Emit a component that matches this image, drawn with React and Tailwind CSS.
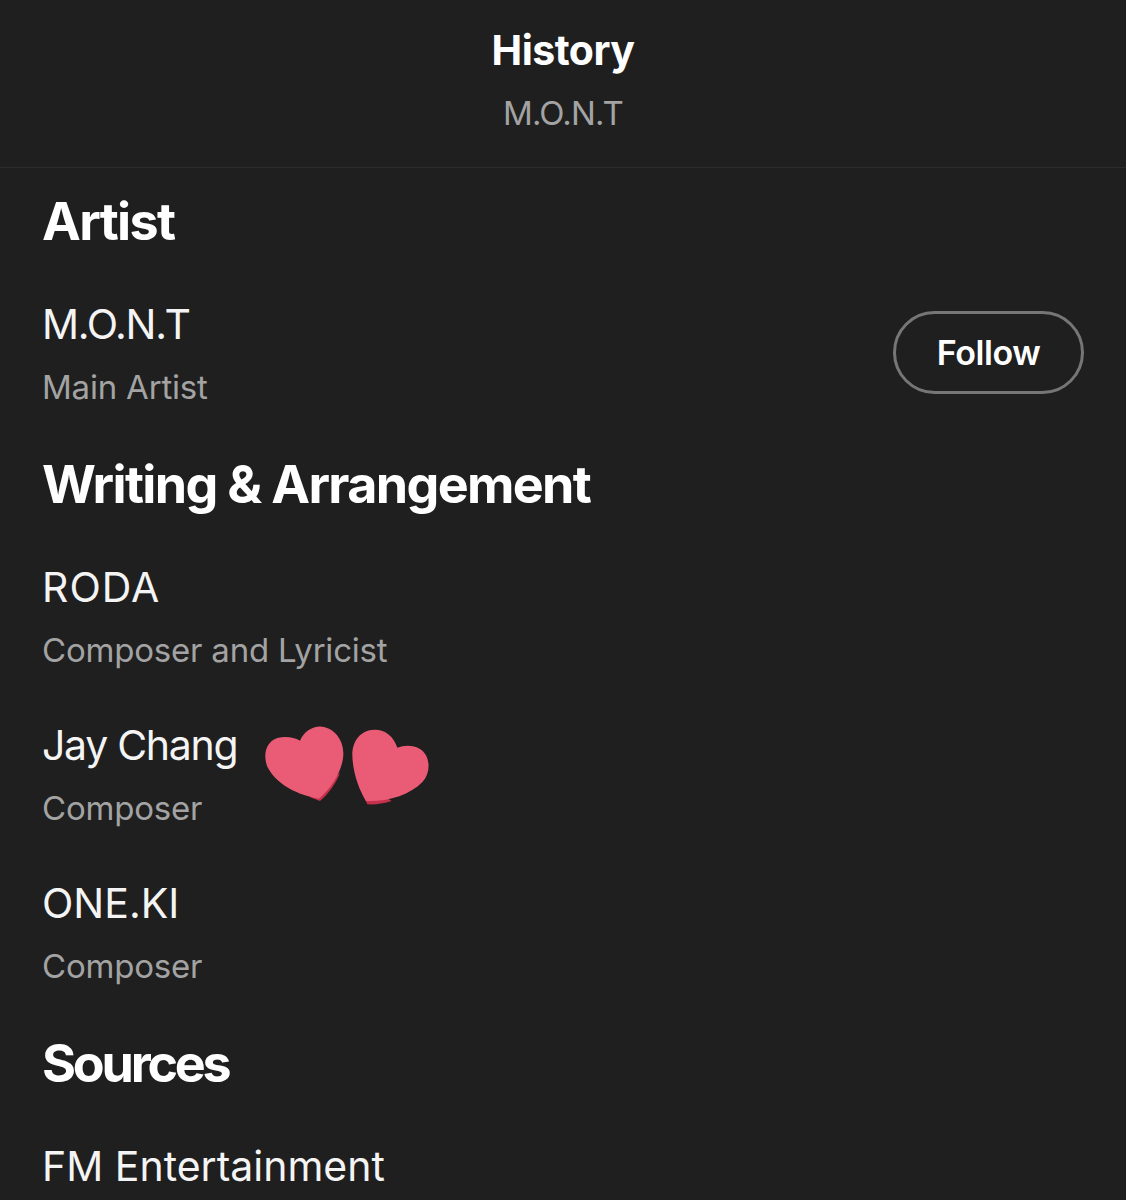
const font = { fontFamily: '"Inter", "Liberation Sans", sans-serif' };

function Hearts() {
  return (
    <svg
      className="absolute left-[198px] top-[-20px]"
      width="210"
      height="120"
      viewBox="0 0 630 360"
    >
      <path d="M300 218C288 250 265 282 240 303L210 292L240 270Z" fill="#c5304c" />
      <path
        d="M180 122C192 95 218 78 245 80C285 84 312 122 310 165C308 210 275 265 237 296C175 285 110 255 82 200C68 165 78 125 112 114C135 108 160 110 180 122Z"
        fill="#ea5c76"
      />
      <path d="M366 280L382 313C410 314 430 311 455 303L420 280Z" fill="#c5304c" />
      <path
        d="M472 143C462 110 435 88 403 89C362 90 337 122 337 165C338 215 355 265 378 303C440 306 510 285 548 245C575 215 570 165 540 147C520 135 495 134 472 143Z"
        fill="#ea5c76"
      />
    </svg>
  );
}

function SectionTitle({ children, className = "tracking-[-1.65px]" }) {
  return (
    <h2 className={`text-[52px] leading-[58px] font-bold text-white ${className}`}>
      {children}
    </h2>
  );
}

function Person({ name, role, className = "", nameClass = "tracking-[0px]", children }) {
  return (
    <div className={`relative ${className}`}>
      <div className={`text-[41px] leading-[50px] font-normal text-[#f4f4f4] ${nameClass}`}>{name}</div>
      {role && <div className="mt-[19px] text-[33px] leading-[38px] tracking-[-0.2px] text-[#a3a3a3]">{role}</div>}
      {children}
    </div>
  );
}

export default function App() {
  return (
    <div className="h-[1200px] w-[1126px] overflow-hidden bg-[#1f1f1f]" style={font}>
      <header className="flex h-[168px] flex-col items-center border-b border-[#2c2c2c] pt-[26px]">
        <h1 className="text-[41px] leading-[48px] font-bold tracking-[-0.5px] text-white">History</h1>
        <p className="mt-[19px] text-[33px] leading-[40px] tracking-[-0.8px] text-[#a3a3a3]">M.O.N.T</p>
      </header>

      <main className="pl-[42px] pr-[42px] pt-[25px]">
        <SectionTitle>Artist</SectionTitle>
        <div className="mt-[48px] flex items-center justify-between">
          <Person name="M.O.N.T" role="Main Artist" nameClass="tracking-[-1.2px]" />
          <button className="flex h-[83px] w-[191px] items-center justify-center rounded-full border-[3px] border-[#767676] text-[34px] font-semibold tracking-[-0.4px] text-white">
            Follow
          </button>
        </div>

        <SectionTitle className="mt-[50px] tracking-[-1.65px]">Writing &amp; Arrangement</SectionTitle>
        <Person name="RODA" role="Composer and Lyricist" className="mt-[48px]" nameClass="tracking-[1px]" />
        <Person name="Jay Chang" role="Composer" className="mt-[51px]" nameClass="tracking-[-1.3px]">
          <Hearts />
        </Person>
        <Person name="ONE.KI" role="Composer" className="mt-[51px]" />

        <SectionTitle className="mt-[50px] tracking-[-3.2px]">Sources</SectionTitle>
        <Person name="FM Entertainment" className="mt-[48px]" />
      </main>
    </div>
  );
}
